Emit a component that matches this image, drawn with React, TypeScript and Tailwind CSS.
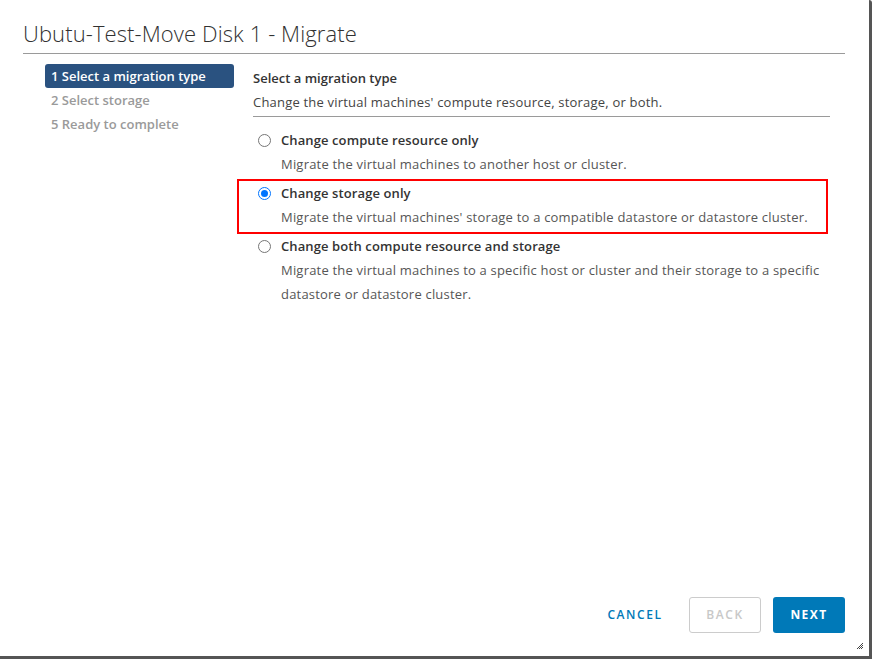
import React from "react";

const font = { fontFamily: "'Open Sans', Lato, 'Liberation Sans', sans-serif" };

function Radio({ checked }: { checked?: boolean }) {
  if (checked) {
    return (
      <span className="flex h-[13px] w-[13px] shrink-0 items-center justify-center rounded-full border-[1.5px] border-[#0075ff] bg-white">
        <span className="h-[7px] w-[7px] rounded-full bg-[#0075ff]" />
      </span>
    );
  }
  return <span className="h-[13px] w-[13px] shrink-0 rounded-full border border-[#767676] bg-white" />;
}

function Option({
  checked,
  title,
  lines,
}: {
  checked?: boolean;
  title: string;
  lines: string[];
}) {
  return (
    <div className="flex">
      <div className="flex h-[24px] w-[28px] items-center pl-[5px]">
        <Radio checked={checked} />
      </div>
      <div className="flex flex-col">
        <div className="h-[24px] text-[13px] font-semibold leading-[24px] tracking-[0.1px] text-[#333]">{title}</div>
        {lines.map((l) => (
          <div key={l} className="h-[24px] text-[13px] leading-[24px] tracking-[0.2px] text-[#565656]">
            {l}
          </div>
        ))}
      </div>
    </div>
  );
}

export default function App() {
  return (
    <div
      style={font}
      className="relative flex h-[659px] w-[872px] flex-col rounded-tr-[3px] border-r-[3px] border-b-[3px] border-[#555] bg-white"
    >
      <div className="ml-[23px] mr-[24px] border-b border-[#9a9a9a] pt-[18px] pb-[5px]">
        <h1 className="text-[22px] font-light leading-[30px] tracking-[0.1px] text-[#313131]">
          Ubutu-Test-Move Disk 1 - Migrate
        </h1>
      </div>

      <div className="flex flex-1">
        <nav className="ml-[45px] mt-[10px] flex w-[189px] flex-col">
          <div className="h-[24px] rounded-[3px] bg-[#2a5280] px-[6px] text-[13px] font-semibold leading-[24px] text-white">
            1 Select a migration type
          </div>
          <div className="h-[24px] px-[6px] text-[13px] font-semibold leading-[24px] text-[#9a9a9a]">2 Select storage</div>
          <div className="h-[24px] px-[6px] text-[13px] font-semibold leading-[24px] text-[#9a9a9a]">5 Ready to complete</div>
        </nav>

        <main className="ml-[19px] mt-[12px] flex w-[577px] flex-col">
          <div className="border-b border-[#9a9a9a] pb-[2px]">
            <div className="h-[24px] text-[13px] font-semibold leading-[24px] text-[#333]">Select a migration type</div>
            <div className="h-[24px] text-[13px] leading-[24px] tracking-[0.2px] text-[#444]">
              Change the virtual machines' compute resource, storage, or both.
            </div>
          </div>

          <div className="mt-[11px] flex flex-col">
            <Option title="Change compute resource only" lines={["Migrate the virtual machines to another host or cluster."]} />
            <div className="-ml-[16px] mr-[2px] mt-[3px] border-2 border-[#ff0000] pl-[14px] pb-[3px]">
              <Option
                checked
                title="Change storage only"
                lines={["Migrate the virtual machines' storage to a compatible datastore or datastore cluster."]}
              />
            </div>
            <Option
              title="Change both compute resource and storage"
              lines={[
                "Migrate the virtual machines to a specific host or cluster and their storage to a specific",
                "datastore or datastore cluster.",
              ]}
            />
          </div>
        </main>
      </div>

      <footer className="flex justify-end pr-[24px] pb-[23px]">
        <button className="mr-[18px] h-[36px] w-[72px] text-[12px] font-semibold tracking-[0.13em] text-[#0079b8]">
          CANCEL
        </button>
        <button className="mr-[12px] h-[36px] w-[72px] rounded-[3px] border border-[#cccccc] text-[12px] font-semibold tracking-[0.13em] text-[#c8c8c8]">
          BACK
        </button>
        <button className="h-[36px] w-[72px] rounded-[3px] bg-[#0079b8] text-[12px] font-bold tracking-[0.12em] text-white">
          NEXT
        </button>
      </footer>

      <svg className="absolute bottom-[6px] right-[5px]" width="8" height="8" viewBox="0 0 8 8">
        <path d="M1 7L7 1M3 7L7 3M5 7L7 5" stroke="#444" strokeWidth="1" />
      </svg>
    </div>
  );
}
